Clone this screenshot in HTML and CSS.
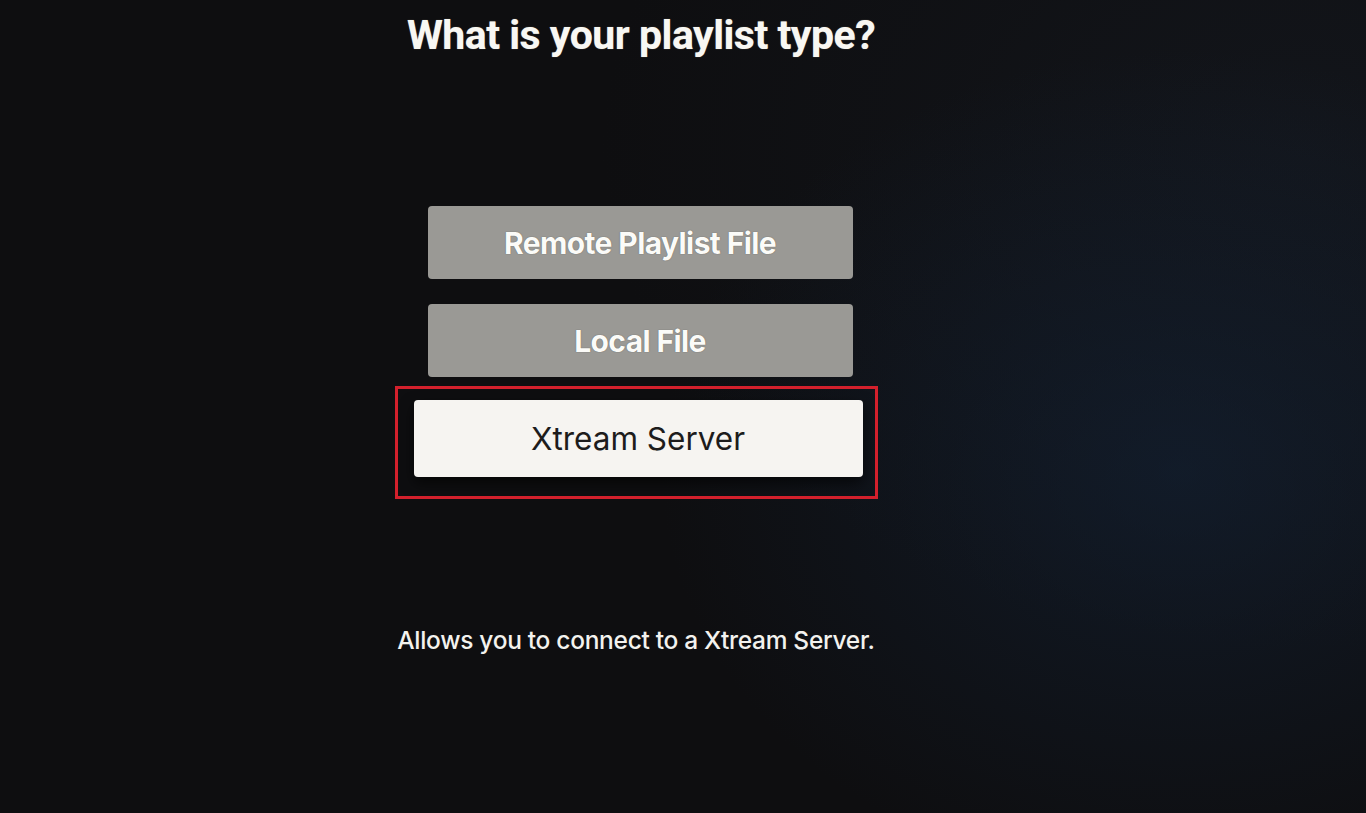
FILE: index.html
```html
<!DOCTYPE html>
<html lang="en">
<head>
<meta charset="utf-8">
<title>What is your playlist type?</title>
<link rel="stylesheet" href="styles.css">
</head>
<body>
<main class="screen">
  <h1 class="title">What is your playlist type?</h1>
  <div class="options">
    <button class="option">Remote Playlist File</button>
    <button class="option">Local File</button>
    <button class="option option--focused">Xtream Server</button>
  </div>
  <p class="hint">Allows you to connect to a Xtream Server.</p>
</main>
</body>
</html>
```
FILE: styles.css
```css
* { box-sizing: border-box; }
html, body { margin: 0; padding: 0; }
body {
  width: 1366px;
  height: 813px;
  overflow: hidden;
  font-family: Inter, "Liberation Sans", sans-serif;
  background:
    radial-gradient(ellipse 520px 420px at 1180px 470px, rgba(20, 38, 62, 0.5), rgba(20, 38, 62, 0) 100%),
    radial-gradient(ellipse 700px 500px at 1300px 150px, rgba(24, 30, 40, 0.45), rgba(24, 30, 40, 0) 100%),
    #0e0e10;
}
.screen {
  height: 813px;
  padding: 8px 86px 0 0;
  display: flex;
  flex-direction: column;
  align-items: center;
}
.title {
  margin: 0 0 0 2px;
  color: #f8f7f3;
  font-family: Roboto, Inter, sans-serif;
  font-size: 41px;
  font-weight: 700;
  line-height: 54px;
  letter-spacing: -0.5px;
  text-shadow: 0 0 1px rgba(255, 240, 200, 0.5);
}
.options {
  margin-top: 144px;
  display: flex;
  flex-direction: column;
  align-items: center;
}
.option {
  width: 425px;
  height: 73px;
  border: none;
  border-radius: 4px;
  background: #9a9995;
  color: #fbfbf8;
  font-family: inherit;
  font-size: 30px;
  font-weight: 700;
  letter-spacing: -0.6px;
  text-shadow: 0 0 1px rgba(50, 50, 50, 0.7);
  margin-bottom: 25px;
  padding: 0;
}
.option--focused {
  position: relative;
  width: 449px;
  height: 77px;
  margin-top: -2px;
  margin-left: -4px;
  background: #f6f4f1;
  color: #1d1c1c;
  font-weight: 400;
  font-size: 31.5px;
  letter-spacing: 0;
  text-shadow: none;
  box-shadow: 0 6px 14px rgba(0, 0, 0, 0.6);
}
.option--focused::after {
  content: "";
  position: absolute;
  left: -19px;
  right: -15px;
  top: -14px;
  bottom: -22px;
  border: 3px solid #d3202c;
  pointer-events: none;
}
.hint {
  margin: 123px 0 0 -8px;
  color: #f3f2ee;
  font-size: 24.5px;
  font-weight: 500;
  line-height: 30px;
  letter-spacing: -0.3px;
}
```
